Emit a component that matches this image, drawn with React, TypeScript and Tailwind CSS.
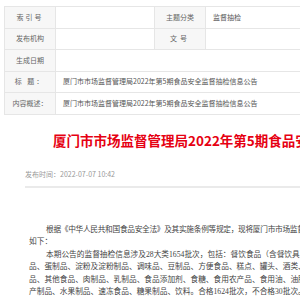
import React from 'react';

const cjk = { fontFamily: '"Noto Sans CJK SC", "Noto Sans", sans-serif' };
const bodyFont = { fontFamily: '"Liberation Serif", "Noto Sans CJK SC", serif' };

const label = "flex items-center justify-center bg-[#f7f7f7] text-[#666] border-r border-b border-[#e6e6e6] h-[21.5px]";
const value = "flex items-center pl-[7px] text-[#555] border-r border-b border-[#e6e6e6] h-[21.5px] whitespace-nowrap";

const bodyLines: { text: string; indent?: boolean; tight?: boolean }[] = [
    { text: "根据《中华人民共和国食品安全法》及其实施条例等规定，现将厦门市市场监督管理局2022年第5期食品安全监督抽检信息公告", indent: true, tight: true },
    { text: "如下：" },
    { text: "本期公告的监督抽检信息涉及28大类1654批次，包括：餐饮食品（含餐饮具）、炒货食品及坚果制品、", indent: true },
    { text: "品、蛋制品、淀粉及淀粉制品、调味品、豆制品、方便食品、糕点、罐头、酒类、冷冻饮品、粮食加工品、" },
    { text: "品、其他食品、肉制品、乳制品、食品添加剂、食糖、食用农产品、食用油、油脂及其制品、蔬菜制品、" },
    { text: "产制品、水果制品、速冻食品、糖果制品、饮料。合格1624批次，不合格30批次。" },
];

export default function App() {
    return (
        <div className="w-[300px] h-[300px] overflow-hidden bg-white" style={cjk}>
            <div className="w-[640px]">
                <div className="ml-[4px] mt-[6px] grid grid-cols-[51px_99px_51px_1fr] border-l border-t border-[#e6e6e6] text-[7px] leading-none">
                    <div className={label}><span className="tracking-[2px]">索引号</span></div>
                    <div className={value}></div>
                    <div className={label}>主题分类</div>
                    <div className={value}>监督抽检</div>

                    <div className={label}>发布机构</div>
                    <div className={value}></div>
                    <div className={label}><span className="tracking-[3px]">文号</span></div>
                    <div className={value}></div>

                    <div className={label}>生成日期</div>
                    <div className={`${value} col-span-3`}></div>

                    <div className={label}><span className="tracking-[2px]">标 题：</span></div>
                    <div className={`${value} col-span-3`}>厦门市市场监督管理局2022年第5期食品安全监督抽检信息公告</div>

                    <div className={label}>内容概述：</div>
                    <div className={`${value} col-span-3`}>厦门市市场监督管理局2022年第5期食品安全监督抽检信息公告</div>
                </div>

                <h1 className="mt-[15px] pl-[53px] text-[13.5px] leading-[20px] font-bold text-[#e60012] whitespace-nowrap">
                    厦门市市场监督管理局2022年第5期食品安全监督抽检信息公告
                </h1>

                <div className="mt-[18px] pl-[25px] text-[7px] leading-[12px] text-[#999]">
                    发布时间：2022-07-07 10:42
                </div>
                <div className="mt-[6px] ml-[25px] h-[2px] bg-[#eaeaea]"></div>

                <div className="mt-[36px] pl-[29px] text-[7.7px] leading-[12.6px] text-[#444]" style={bodyFont}>
                    {bodyLines.map((line, i) => (
                        <p
                            key={i}
                            className={`whitespace-nowrap ${line.indent ? "pl-[17px]" : ""} ${line.tight ? "tracking-[-0.3px]" : ""}`}
                        >
                            {line.text}
                        </p>
                    ))}
                </div>
            </div>
        </div>
    );
}
